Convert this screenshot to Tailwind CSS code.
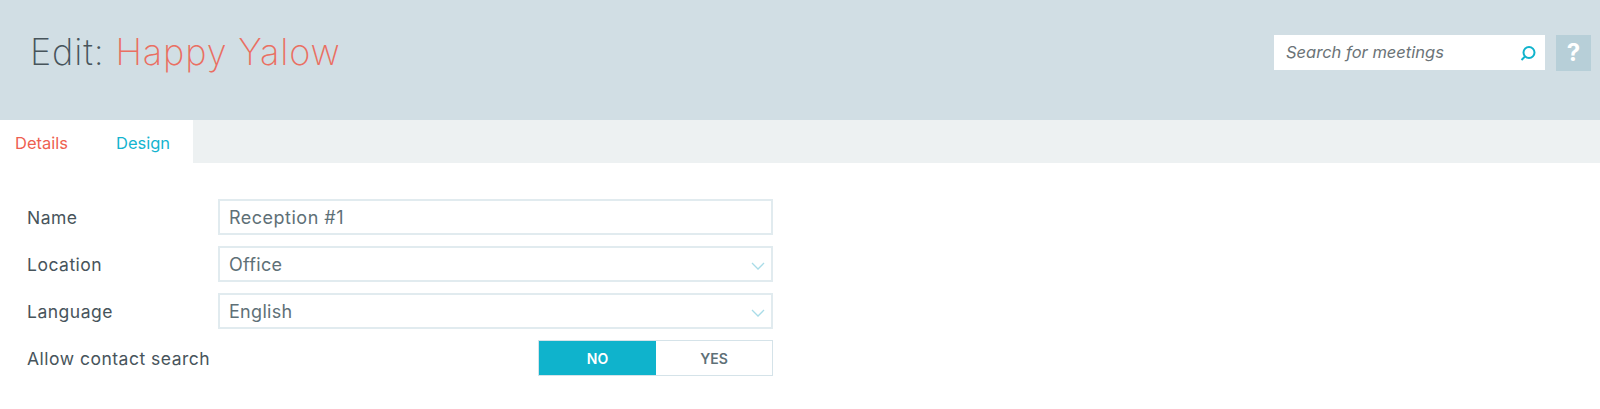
<!DOCTYPE html>
<html lang="en">
<head>
    <meta charset="UTF-8">
    <title>Edit: Happy Yalow</title>
    <script src="https://cdn.jsdelivr.net/npm/@tailwindcss/browser@4"></script>
</head>
<body class="bg-white font-['Inter',sans-serif] h-[409px] overflow-hidden">
    <!-- Header -->
    <header class="h-[120px] bg-[#d1dee4] flex items-start justify-between pl-[30px] pr-[9px]">
        <h1 class="text-[36px] leading-[44px] mt-[30px] font-extralight tracking-[0.85px] text-[#47545b]">Edit: <span class="text-[#ea6f62]">Happy Yalow</span></h1>
        <div class="flex gap-[11px] mt-[35px]">
            <div class="w-[271px] h-[35px] bg-white flex items-center justify-between pl-[12px] pr-[8px]">
                <span class="italic text-[16.5px] text-[#6b7377]">Search for meetings</span>
                <svg class="w-[18px] h-[18px]" viewBox="0 0 18 18" fill="none" stroke="#0fb3cc" stroke-width="2"><circle cx="10" cy="8.5" r="5.5"/><path d="M6 12.5 2.5 16"/></svg>
            </div>
            <div class="w-[35px] h-[36px] bg-[#b7cfd8] flex items-center justify-center text-white font-bold text-[24px]">?</div>
        </div>
    </header>

    <!-- Tabs -->
    <nav class="h-[43px] bg-[#edf1f2] flex">
        <div class="w-[193px] bg-white flex items-center text-[16.5px] pt-[4px]">
            <span class="ml-[15px] text-[#ee5f51]">Details</span>
            <span class="ml-[48px] text-[#14b4cf]">Design</span>
        </div>
    </nav>

    <!-- Form -->
    <form class="pl-[27px] pt-[36px] w-[773px] flex flex-col gap-[11px] text-[17.5px] tracking-[0.5px]">
        <div class="flex items-center h-[36px]">
            <label class="w-[191px] text-[#47545b] pt-[2px]">Name</label>
            <div class="flex-1 h-full border-2 border-[#e1ebef] flex items-center pl-[9px] text-[18px] tracking-[0.5px] text-[#5e7077]">Reception #1</div>
        </div>
        <div class="flex items-center h-[36px]">
            <label class="w-[191px] text-[#47545b] pt-[2px]">Location</label>
            <div class="flex-1 h-full border-2 border-[#e1ebef] flex items-center justify-between pl-[9px] pr-[6px] text-[18px] tracking-[0.3px] text-[#5e7077]">
                Office
                <svg class="w-[14px] h-[8px] mt-[4px]" viewBox="0 0 14 8" fill="none" stroke="#a9dce8" stroke-width="1.3"><path d="M1 1l6 6 6-6"/></svg>
            </div>
        </div>
        <div class="flex items-center h-[36px]">
            <label class="w-[191px] text-[#47545b] pt-[2px]">Language</label>
            <div class="flex-1 h-full border-2 border-[#e1ebef] flex items-center justify-between pl-[9px] pr-[6px] text-[18px] tracking-[0.3px] text-[#5e7077]">
                English
                <svg class="w-[14px] h-[8px] mt-[4px]" viewBox="0 0 14 8" fill="none" stroke="#a9dce8" stroke-width="1.3"><path d="M1 1l6 6 6-6"/></svg>
            </div>
        </div>
        <div class="flex items-center justify-between h-[36px]">
            <label class="text-[#47545b] pt-[2px]">Allow contact search</label>
            <div class="w-[235px] h-full border border-[#d5e3e9] flex text-[14px] font-semibold tracking-normal">
                <div class="w-[117px] bg-[#0fb3cc] text-white flex items-center justify-center">NO</div>
                <div class="flex-1 text-[#5e7077] flex items-center justify-center">YES</div>
            </div>
        </div>
    </form>
</body>
</html>
